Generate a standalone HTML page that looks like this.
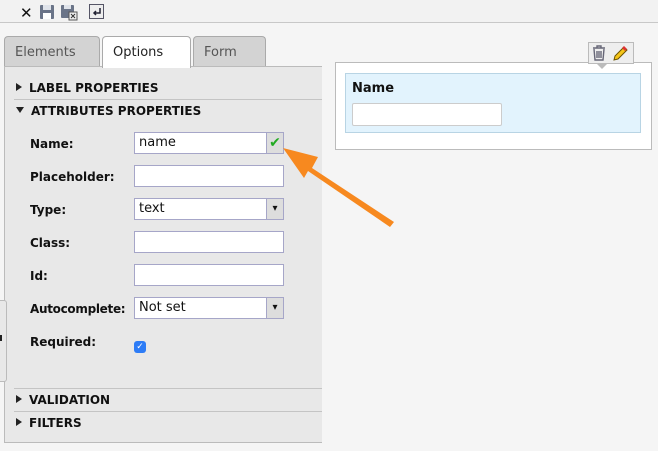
<!DOCTYPE html>
<html><head><style>
body{margin:0;width:658px;height:451px;background:#f5f5f5;font-family:Verdana,"DejaVu Sans",sans-serif;position:relative;overflow:hidden;font-size:13px;color:#111}
.a{position:absolute}
.tb{left:0;top:0;width:658px;height:22px;background:#f2f2f2;border-bottom:1px solid #c8c8c8}
.tab{top:36px;height:31px;border:1px solid #aaa;border-bottom:none;border-radius:4px 4px 0 0;background:#d3d3d3;color:#555;font-size:13px;line-height:31px;box-sizing:border-box;padding-left:10px}
.panel{left:4px;top:66px;width:318px;height:377px;background:#e8e8e8;border:1px solid #bbb;border-right:none;box-sizing:border-box}
.h{left:16px;font-weight:bold;font-size:12px;letter-spacing:0}
.h:before{content:"";display:inline-block;border-left:6px solid #222;border-top:4px solid transparent;border-bottom:4px solid transparent;margin-right:7px;vertical-align:1px}
.hd:before{border-left:4px solid transparent;border-right:4px solid transparent;border-top:6px solid #222;border-bottom:none;vertical-align:2px}
.ln{left:14px;width:308px;height:1px;background:#c4c4c4}
.lb{left:30px;font-weight:bold;font-size:12px}
.in{left:134px;width:150px;height:22px;background:#fff;border:1px solid #a6a6c8;box-sizing:border-box;font-size:13px;padding-left:4px;line-height:20px}
.btn{left:266px;width:18px;height:22px;background:#ddd;border:1px solid #a6a6c8;box-sizing:border-box;text-align:center;font-size:10px;line-height:20px}
</style></head><body>
<div class="a tb"></div>
<div class="a" style="left:20px;top:4px;font-weight:bold;font-size:15px">✕</div>
<svg class="a" style="left:39px;top:4px" width="16" height="16"><rect x="1" y="1" width="14" height="14" rx="1" fill="#6a7488"/><rect x="4" y="1" width="8" height="5" fill="#dfe3ea"/><rect x="4" y="9" width="8" height="6" fill="#fff"/></svg>
<svg class="a" style="left:60px;top:4px" width="18" height="17"><rect x="1" y="1" width="13" height="13" rx="1" fill="#6a7488"/><rect x="4" y="1" width="7" height="4" fill="#dfe3ea"/><rect x="9" y="8" width="8" height="8" fill="#eee" stroke="#555"/><path d="M11 10l4 4M15 10l-4 4" stroke="#333"/></svg>
<svg class="a" style="left:89px;top:4px" width="15" height="15"><rect x=".5" y=".5" width="14" height="14" fill="#eee" stroke="#556"/><path d="M11 4v5H5M7 7l-2 2 2 2" stroke="#223" fill="none" stroke-width="1.5"/></svg>
<div class="a tab" style="left:4px;width:96px">Elements</div>
<div class="a tab" style="left:193px;width:73px">Form</div>
<div class="a panel"></div>
<div class="a tab" style="left:102px;width:89px;height:32px;background:#fff;color:#222;z-index:2">Options</div>
<div class="a" style="left:0;top:300px;width:6px;height:80px;background:#e8e8e8;border:1px solid #bbb;border-left:none;border-radius:0 3px 3px 0"></div>
<div class="a" style="left:0;top:335px;width:2px;height:6px;background:#222"></div>
<div class="a h" style="top:81px">LABEL PROPERTIES</div>
<div class="a ln" style="top:99px"></div>
<div class="a h hd" style="top:104px">ATTRIBUTES PROPERTIES</div>
<div class="a lb" style="top:137px">Name:</div>
<div class="a in" style="top:132px;width:133px">name</div>
<div class="a btn" style="top:132px;color:#2a2;font-size:14px">✔</div>
<div class="a lb" style="top:170px">Placeholder:</div>
<div class="a in" style="top:165px"></div>
<div class="a lb" style="top:203px">Type:</div>
<div class="a in" style="top:198px;width:133px">text</div>
<div class="a btn" style="top:198px">▾</div>
<div class="a lb" style="top:236px">Class:</div>
<div class="a in" style="top:231px"></div>
<div class="a lb" style="top:269px">Id:</div>
<div class="a in" style="top:264px"></div>
<div class="a lb" style="top:302px;letter-spacing:-0.3px">Autocomplete:</div>
<div class="a in" style="top:297px;width:133px">Not set</div>
<div class="a btn" style="top:297px">▾</div>
<div class="a lb" style="top:335px">Required:</div>
<div class="a" style="left:134px;top:341px;width:12px;height:12px;background:#2d7cf6;border-radius:3px;color:#fff;font-size:9px;line-height:12px;text-align:center">✓</div>
<div class="a ln" style="top:388px"></div>
<div class="a h" style="top:393px">VALIDATION</div>
<div class="a ln" style="top:411px"></div>
<div class="a h" style="top:416px">FILTERS</div>
<div class="a" style="left:335px;top:62px;width:317px;height:88px;background:#fff;border:1px solid #bbb;box-sizing:border-box"></div>
<div class="a" style="left:345px;top:73px;width:296px;height:60px;background:#e2f3fd;border:1px solid #b8d4e4;box-sizing:border-box"></div>
<div class="a" style="left:352px;top:81px;font-weight:bold;font-size:13px">Name</div>
<div class="a" style="left:352px;top:103px;width:150px;height:23px;background:#fff;border:1px solid #ccc;border-radius:2px;box-sizing:border-box"></div>
<div class="a" style="left:588px;top:42px;width:46px;height:22px;background:#eee;border:1px solid #bbb;box-sizing:border-box"></div>
<div class="a" style="left:596px;top:63px;width:0;height:0;border-left:6px solid transparent;border-right:6px solid transparent;border-top:6px solid #bbb"></div>
<svg class="a" style="left:591px;top:45px" width="40" height="17"><path d="M2 3h12M6 3V1h4v2M3 4l1 11h8l1-11M6 6v7M8 6v7M10 6v7" stroke="#667" fill="none" stroke-width="1.4"/><path d="M23 15l1-4 9-9 3 3-9 9z" fill="#f5c518" stroke="#6a5200"/><path d="M31 3l3 3 2-2-3-3z" fill="#d33"/></svg>
<svg class="a" style="left:0;top:0" width="658" height="451"><path d="M394 222L312 168 318 157 283 148 304 178 308 171 390 227z" fill="#f7891f"/></svg>
</body></html>
